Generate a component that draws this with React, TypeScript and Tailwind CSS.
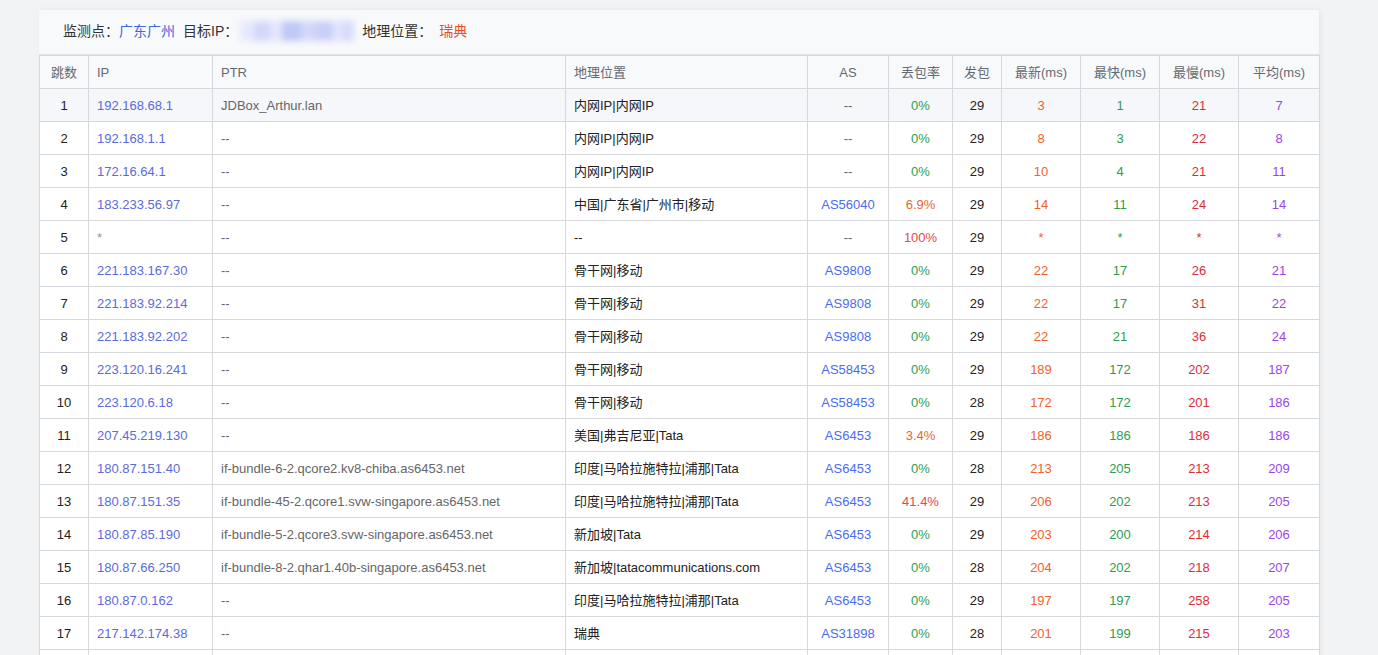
import React from "react";

type Hop = {
  n: number;
  ip: string;
  ptr: string;
  geo: string;
  as: string;
  loss: string;
  sent: number;
  last: string;
  best: string;
  worst: string;
  avg: string;
};

const hops: Hop[] = [
  { n: 1, ip: "192.168.68.1", ptr: "JDBox_Arthur.lan", geo: "内网IP|内网IP", as: "--", loss: "0%", sent: 29, last: "3", best: "1", worst: "21", avg: "7" },
  { n: 2, ip: "192.168.1.1", ptr: "--", geo: "内网IP|内网IP", as: "--", loss: "0%", sent: 29, last: "8", best: "3", worst: "22", avg: "8" },
  { n: 3, ip: "172.16.64.1", ptr: "--", geo: "内网IP|内网IP", as: "--", loss: "0%", sent: 29, last: "10", best: "4", worst: "21", avg: "11" },
  { n: 4, ip: "183.233.56.97", ptr: "--", geo: "中国|广东省|广州市|移动", as: "AS56040", loss: "6.9%", sent: 29, last: "14", best: "11", worst: "24", avg: "14" },
  { n: 5, ip: "*", ptr: "--", geo: "--", as: "--", loss: "100%", sent: 29, last: "*", best: "*", worst: "*", avg: "*" },
  { n: 6, ip: "221.183.167.30", ptr: "--", geo: "骨干网|移动", as: "AS9808", loss: "0%", sent: 29, last: "22", best: "17", worst: "26", avg: "21" },
  { n: 7, ip: "221.183.92.214", ptr: "--", geo: "骨干网|移动", as: "AS9808", loss: "0%", sent: 29, last: "22", best: "17", worst: "31", avg: "22" },
  { n: 8, ip: "221.183.92.202", ptr: "--", geo: "骨干网|移动", as: "AS9808", loss: "0%", sent: 29, last: "22", best: "21", worst: "36", avg: "24" },
  { n: 9, ip: "223.120.16.241", ptr: "--", geo: "骨干网|移动", as: "AS58453", loss: "0%", sent: 29, last: "189", best: "172", worst: "202", avg: "187" },
  { n: 10, ip: "223.120.6.18", ptr: "--", geo: "骨干网|移动", as: "AS58453", loss: "0%", sent: 28, last: "172", best: "172", worst: "201", avg: "186" },
  { n: 11, ip: "207.45.219.130", ptr: "--", geo: "美国|弗吉尼亚|Tata", as: "AS6453", loss: "3.4%", sent: 29, last: "186", best: "186", worst: "186", avg: "186" },
  { n: 12, ip: "180.87.151.40", ptr: "if-bundle-6-2.qcore2.kv8-chiba.as6453.net", geo: "印度|马哈拉施特拉|浦那|Tata", as: "AS6453", loss: "0%", sent: 28, last: "213", best: "205", worst: "213", avg: "209" },
  { n: 13, ip: "180.87.151.35", ptr: "if-bundle-45-2.qcore1.svw-singapore.as6453.net", geo: "印度|马哈拉施特拉|浦那|Tata", as: "AS6453", loss: "41.4%", sent: 29, last: "206", best: "202", worst: "213", avg: "205" },
  { n: 14, ip: "180.87.85.190", ptr: "if-bundle-5-2.qcore3.svw-singapore.as6453.net", geo: "新加坡|Tata", as: "AS6453", loss: "0%", sent: 29, last: "203", best: "200", worst: "214", avg: "206" },
  { n: 15, ip: "180.87.66.250", ptr: "if-bundle-8-2.qhar1.40b-singapore.as6453.net", geo: "新加坡|tatacommunications.com", as: "AS6453", loss: "0%", sent: 28, last: "204", best: "202", worst: "218", avg: "207" },
  { n: 16, ip: "180.87.0.162", ptr: "--", geo: "印度|马哈拉施特拉|浦那|Tata", as: "AS6453", loss: "0%", sent: 29, last: "197", best: "197", worst: "258", avg: "205" },
  { n: 17, ip: "217.142.174.38", ptr: "--", geo: "瑞典", as: "AS31898", loss: "0%", sent: 28, last: "201", best: "199", worst: "215", avg: "203" },
];

function lossColor(loss: string) {
  if (loss === "0%") return "text-[#2f9e4f]";
  const v = parseFloat(loss);
  if (v >= 40) return "text-[#e5484d]";
  return "text-[#e8672e]";
}

// blurred-out target ip, drawn as soft lavender blocks
const blurBlocks = [
  { w: "w-[14px]", c: "bg-[#e6e9fc]" },
  { w: "w-[16px]", c: "bg-[#d2d8f9]" },
  { w: "w-[12px]", c: "bg-[#e4e6fb]" },
  { w: "w-[20px]", c: "bg-[#bfc8f7]" },
  { w: "w-[14px]", c: "bg-[#d3d8f9]" },
  { w: "w-[18px]", c: "bg-[#c9d0f8]" },
  { w: "w-[10px]", c: "bg-[#e2e5fb]" },
  { w: "w-[12px]", c: "bg-[#d6dbf9]" },
];

const th = "border border-[#d7d8de] font-normal text-[#666a70] h-[33px] pt-px";
const td = "border border-[#d7d8de] h-[33px] pt-px";

export default function App() {
  return (
    <div className="min-h-screen bg-[#f2f3f5] pl-[39px] pt-[10px] font-['Liberation_Sans','Noto_Sans_CJK_SC',sans-serif] text-[13px]">
      <div className="w-[1280px] bg-white shadow-[2px_0_6px_rgba(0,0,0,0.06)]">
        <div className="h-[45px] bg-[#f8f9fb] border-b border-[#e1e2e6] flex items-center pl-[24px] pb-[2px] text-[14px] text-[#333]">
          <span>监测点：</span>
          <span className="text-[#3f64e4]">广东广州</span>
          <span className="ml-[8px]">目标IP：</span>
          <span className="ml-[2px] w-[114px] h-[20px] flex blur-[3px]">
            {blurBlocks.map((b, i) => (
              <span key={i} className={b.w + " " + b.c + " h-full"} />
            ))}
          </span>
          <span className="ml-[8px]">地理位置：</span>
          <span className="ml-[7px] text-[#e6502a]">瑞典</span>
        </div>
        <table className="w-[1280px] table-fixed border-collapse">
          <colgroup>
            <col className="w-[49px]" />
            <col className="w-[124px]" />
            <col className="w-[353px]" />
            <col className="w-[242px]" />
            <col className="w-[81px]" />
            <col className="w-[64px]" />
            <col className="w-[49px]" />
            <col className="w-[79px]" />
            <col className="w-[79px]" />
            <col className="w-[79px]" />
            <col className="w-[81px]" />
          </colgroup>
          <thead>
            <tr className="bg-[#f8f9fb]">
              <th className={th + " text-center"}>跳数</th>
              <th className={th + " text-left pl-[8px]"}>IP</th>
              <th className={th + " text-left pl-[8px]"}>PTR</th>
              <th className={th + " text-left pl-[8px]"}>地理位置</th>
              <th className={th + " text-center"}>AS</th>
              <th className={th + " text-center"}>丢包率</th>
              <th className={th + " text-center"}>发包</th>
              <th className={th + " text-center"}>最新(ms)</th>
              <th className={th + " text-center"}>最快(ms)</th>
              <th className={th + " text-center"}>最慢(ms)</th>
              <th className={th + " text-center"}>平均(ms)</th>
            </tr>
          </thead>
          <tbody>
            {hops.map((h) => (
              <tr key={h.n} className={h.n === 1 ? "bg-[#f5f7fa]" : "bg-white"}>
                <td className={td + " text-center text-[#222]"}>{h.n}</td>
                <td className={td + " pl-[8px] " + (h.ip === "*" ? "text-[#999]" : "text-[#5b6bdc]")}>{h.ip}</td>
                <td className={td + " pl-[8px] text-[#666]"}>{h.ptr}</td>
                <td className={td + " pl-[8px] text-[#222]"}>{h.geo}</td>
                <td className={td + " text-center " + (h.as === "--" ? "text-[#666]" : "text-[#4a6cf0]")}>{h.as}</td>
                <td className={td + " text-center " + (h.loss === "100%" ? "text-[#e5484d]" : lossColor(h.loss))}>{h.loss}</td>
                <td className={td + " text-center text-[#222]"}>{h.sent}</td>
                <td className={td + " text-center text-[#f0622e]"}>{h.last}</td>
                <td className={td + " text-center text-[#2e9d52]"}>{h.best}</td>
                <td className={td + " text-center text-[#dc2d3a]"}>{h.worst}</td>
                <td className={td + " text-center text-[#9a46e6]"}>{h.avg}</td>
              </tr>
            ))}
            {/* next hop starts just below the fold */}
            <tr className="bg-white">
              {Array.from({ length: 11 }).map((_, i) => (
                <td key={i} className={td} />
              ))}
            </tr>
          </tbody>
        </table>
      </div>
    </div>
  );
}
